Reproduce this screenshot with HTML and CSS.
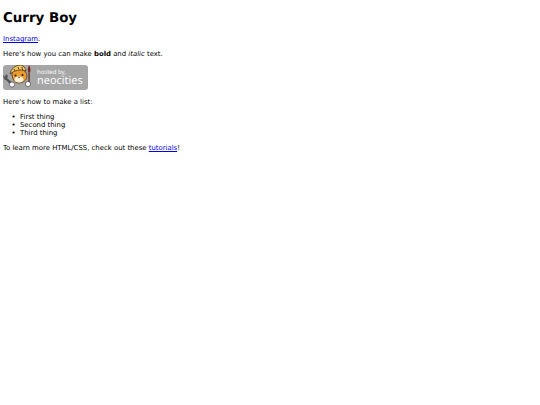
FILE: index.html
```html
<!DOCTYPE html>
<html lang="en">
<head>
  <meta charset="UTF-8">
  <title>Curry Boy</title>
  <link rel="stylesheet" href="styles.css">
</head>
<body>
  <h1 class="title">Curry Boy</h1>
  <p><a href="#">Instagram</a>.</p>
  <p>Here's how you can make <strong>bold</strong> and <em>italic</em> text.</p>

  <!-- hosted by badge -->
  <a href="#" class="badge">
    <svg class="mascot" width="32" height="25" viewBox="0 0 32 25">
      <path d="M0 10 L2 12 L3 9 L5 11 L4 13 L11 19 L9 21 L3 15 L1 14 Z" fill="#555"/>
      <rect x="25.4" y="6" width="1.4" height="12" fill="#5a3a22"/>
      <path d="M26 0 C27.6 3 27.8 5 27.2 7 L25 7 C24.6 5 25 2 26 0 Z" fill="#7c2a28"/>
      <path d="M9 8 C10 5 13 4 16 4 C20 4 24 7 24 11 C24 15 20 18 15.500 18 C11 18 9 13 9 8 Z" fill="#ea9c30" stroke="#3c2410" stroke-width=".7"/>
      <path d="M7 9 C8 4 12 0 18 0 C21 1 23 4 23 6 C17 4 12 5 7 9 Z" fill="#f0c860" stroke="#3c2410" stroke-width=".7"/>
      <path d="M11 4 L12 6 M15 2 L16 4.500 M19 2 L19.500 5" stroke="#3c2410" stroke-width=".8" fill="none"/>
      <ellipse cx="16" cy="14.500" rx="4.500" ry="3" fill="#fff1d8"/>
      <circle cx="12.500" cy="10.500" r="1" fill="#222"/>
      <circle cx="19.500" cy="10" r="1" fill="#222"/>
      <circle cx="16" cy="12.500" r=".7" fill="#333"/>
      <circle cx="9" cy="19.500" r="2.600" fill="#fff" stroke="#444" stroke-width=".7"/>
      <circle cx="25" cy="19" r="2.600" fill="#fff" stroke="#444" stroke-width=".7"/>
    </svg>
    <span class="badge-text">
      <span class="hosted">hosted by,</span>
      <span class="neocities">neocities</span>
    </span>
  </a>

  <p class="after-badge">Here's how to make a list:</p>
  <ul>
    <li>First thing</li>
    <li>Second thing</li>
    <li>Third thing</li>
  </ul>
  <p>To learn more HTML/CSS, check out these <a href="#">tutorials</a>!</p>
</body>
</html>
```

FILE: styles.css
```css
body {
  margin: 3px;
  font-family: "DejaVu Sans", sans-serif;
  font-size: 6.9px;
  line-height: 8px;
  color: #000;
  background-color: #fff;
  text-rendering: geometricPrecision;
}

a {
  color: #00e;
}

p {
  margin: 7px 0;
}

.title {
  font-size: 13.4px;
  line-height: 18px;
  margin: 7px 0;
}

ul {
  margin: 6px 0;
  padding-left: 17px;
}

li::marker {
  content: "\2022\00a0\00a0";
}

.badge {
  display: flex;
  align-items: center;
  width: 85px;
  height: 25px;
  margin-top: 6px;
  background-color: #a6a6a6;
  border-radius: 3px;
  text-decoration: none;
  color: #fff;
}

.after-badge {
  margin-top: 8px;
}

.badge-text {
  display: flex;
  flex-direction: column;
  margin-left: 2px;
  gap: 1px;
}

.hosted {
  font-family: "Open Sans", sans-serif;
  font-size: 6px;
  line-height: 6px;
}

.neocities {
  font-family: "Open Sans", sans-serif;
  font-size: 11px;
  line-height: 10px;
}
```
